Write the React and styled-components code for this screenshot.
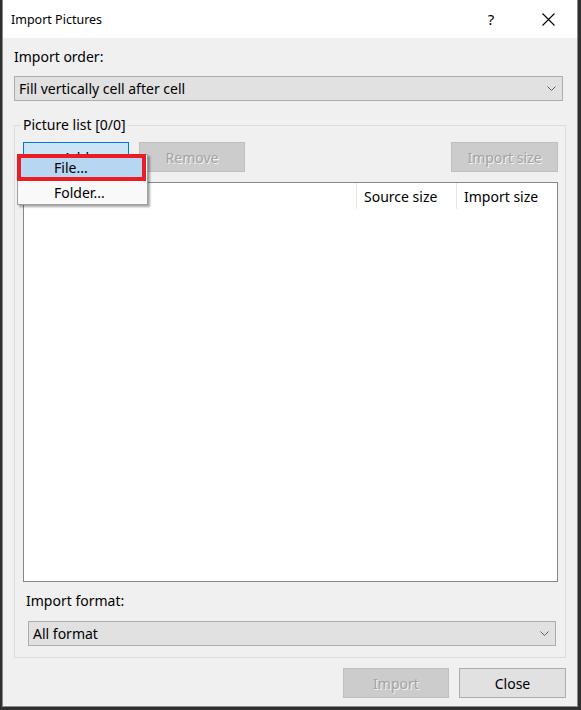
import React from 'react';
import styled, { createGlobalStyle } from 'styled-components';

const GlobalStyle = createGlobalStyle`
    html, body {
        margin: 0;
        padding: 0;
        background-color: #2f2f2f;
    }
    body {
        font-family: "Noto Sans", "Liberation Sans", sans-serif;
        font-size: 14px;
        color: #000;
    }
`

const Dialog = styled.div`
    position: relative;
    box-sizing: border-box;
    margin-left: 2px;
    width: 576px;
    height: 707px;
    background-color: #f0f0f0;
    border: 1px solid #8a8a8a;
    border-top: none;
    display: flex;
    flex-direction: column;
`

const TitleBar = styled.div`
    height: 38px;
    background-color: #fff;
    display: flex;
    align-items: center;
    padding-left: 8px;
`

const Title = styled.span`
    flex: 1;
    font-size: 12.5px;
    padding-top: 1px;
`

const TitleButton = styled.div`
    width: ${props => props.w}px;
    height: 38px;
    display: flex;
    align-items: center;
    justify-content: center;
    font-size: 15px;
`

const Content = styled.div`
    display: flex;
    flex-direction: column;
    padding: 9px 11px 0 11px;
`

const Label = styled.div`
    height: 20px;
    line-height: 20px;
    margin-left: ${props => props.indent || 0}px;
    margin-top: ${props => props.top || 0}px;
`

const Combo = styled.div`
    box-sizing: border-box;
    height: 25px;
    margin-top: ${props => props.top}px;
    margin-left: ${props => props.indent || 0}px;
    width: ${props => props.w}px;
    background-color: #e1e1e1;
    border: 1px solid #adadad;
    display: flex;
    align-items: center;
    padding: 0 6px 0 4px;
`

const ComboText = styled.span`
    flex: 1;
`

const Group = styled.fieldset`
    box-sizing: border-box;
    width: 551px;
    margin: 14px 0 0 0;
    padding: 0 7px 11px 8px;
    border: 1px solid #dcdcdc;
    display: flex;
    flex-direction: column;
`

const Legend = styled.legend`
    padding: 0 2px;
    margin-left: -2px;
    line-height: 20px;
`

const ButtonRow = styled.div`
    display: flex;
    gap: 10px;
    margin-top: 7px;
`

const Button = styled.div`
    box-sizing: border-box;
    width: ${props => props.w}px;
    height: 30px;
    display: flex;
    align-items: center;
    justify-content: center;
    border: 1px solid ${props => props.active ? '#0078d7' : props.disabled ? '#bfbfbf' : '#adadad'};
    background-color: ${props => props.active ? '#cce4f7' : props.disabled ? '#cccccc' : '#e1e1e1'};
    color: ${props => props.disabled ? '#a3a3a3' : '#000'};
    text-shadow: ${props => props.disabled ? '1px 1px 0 #f4f4f4' : 'none'};
`

const Spacer = styled.div`
    flex: 1;
`

const ListView = styled.div`
    box-sizing: border-box;
    width: 535px;
    height: 400px;
    margin-top: 10px;
    background-color: #fff;
    border: 1px solid #828790;
`

const ListHeader = styled.div`
    display: flex;
    height: 26px;
`

const HeaderCell = styled.div`
    box-sizing: border-box;
    width: ${props => props.w ? props.w + 'px' : 'auto'};
    flex: ${props => props.w ? 'none' : 1};
    border-left: ${props => props.w ? '1px solid #e5e5e5' : 'none'};
    padding-left: 7px;
    display: flex;
    align-items: center;
`

const Footer = styled.div`
    display: flex;
    justify-content: flex-end;
    gap: 10px;
    margin-top: 10px;
`

const Menu = styled.div`
    position: absolute;
    left: 14px;
    top: 154px;
    width: 131px;
    box-sizing: border-box;
    background-color: #f9f9f9;
    border: 1px solid #a0a0a0;
    box-shadow: 2px 2px 2px rgba(0, 0, 0, 0.35);
`

const MenuItem = styled.div`
    box-sizing: border-box;
    height: ${props => props.selected ? 27 : 23}px;
    display: flex;
    align-items: center;
    padding-left: ${props => props.selected ? 33 : 36}px;
    background-color: ${props => props.selected ? '#b6d6f2' : 'transparent'};
    border: ${props => props.selected ? '4px solid #ec1c24' : 'none'};
    margin: ${props => props.selected ? '-1px 1px 0 -1px' : '0'};
`

const Chevron = () => (
    <svg width="9" height="5" viewBox="0 0 9 5">
        <path d="M0.5 0.5 L4.5 4.5 L8.5 0.5" fill="none" stroke="#606060" strokeWidth="1" />
    </svg>
)

const CloseIcon = () => (
    <svg width="13" height="13" viewBox="0 0 13 13">
        <path d="M0.5 0.5 L12.5 12.5 M12.5 0.5 L0.5 12.5" fill="none" stroke="#000" strokeWidth="1.1" />
    </svg>
)

const App = () => {
    return (
        <>
            <GlobalStyle />
            <Dialog>
                <TitleBar>
                    <Title>Import Pictures</Title>
                    <TitleButton w={56}>?</TitleButton>
                    <TitleButton w={58}><CloseIcon /></TitleButton>
                </TitleBar>
                <Content>
                    <Label>Import order:</Label>
                    <Combo top={9} w={549}>
                        <ComboText>Fill vertically cell after cell</ComboText>
                        <Chevron />
                    </Combo>
                    <Group>
                        <Legend>Picture list [0/0]</Legend>
                        <ButtonRow>
                            <Button w={106} active>Add</Button>
                            <Button w={106} disabled>Remove</Button>
                            <Spacer />
                            <Button w={107} disabled>Import size</Button>
                        </ButtonRow>
                        <ListView>
                            <ListHeader>
                                <HeaderCell />
                                <HeaderCell w={100}>Source size</HeaderCell>
                                <HeaderCell w={101}>Import size</HeaderCell>
                            </ListHeader>
                        </ListView>
                        <Label indent={3} top={9}>Import format:</Label>
                        <Combo top={10} indent={5} w={528}>
                            <ComboText>All format</ComboText>
                            <Chevron />
                        </Combo>
                    </Group>
                    <Footer>
                        <Button w={106} disabled>Import</Button>
                        <Button w={107}>Close</Button>
                    </Footer>
                </Content>
                <Menu>
                    <MenuItem selected>File...</MenuItem>
                    <MenuItem>Folder...</MenuItem>
                </Menu>
            </Dialog>
        </>
    );
};

export default App;
